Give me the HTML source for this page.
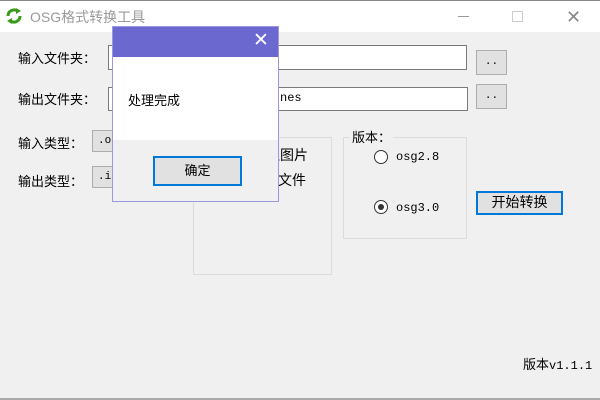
<!DOCTYPE html>
<html><head><meta charset="utf-8"><style>
*{margin:0;padding:0;box-sizing:border-box}
body{width:600px;height:400px;background:#f0f0f0;position:relative;overflow:hidden;font-family:"Liberation Sans","Noto Sans CJK SC",sans-serif;font-size:13px;color:#000}
.a{position:absolute;white-space:nowrap}
.tb{background:#fff;border:1px solid #7a7a7a}
.btn{background:#e1e1e1;border:1px solid #adadad;font-family:"Liberation Mono",monospace;font-size:11px;text-align:center}
.mono{font-family:"Liberation Mono","Noto Sans CJK SC",monospace}
.grp{border:1px solid #dcdcdc}
</style></head><body>
<div class="a" style="left:0;top:0;width:600px;height:32px;background:#fff;border-top:1px solid #888"></div>
<svg class="a" style="left:5px;top:7px" width="18" height="18" viewBox="0 0 18 18"><path d="M3 9a6 6 0 0 1 10-4.5" stroke="#3a9a1a" stroke-width="3" fill="none"/><path d="M11 1l5 3-5 3z" fill="#3a9a1a"/><path d="M15 9a6 6 0 0 1-10 4.5" stroke="#3a9a1a" stroke-width="3" fill="none"/><path d="M7 17l-5-3 5-3z" fill="#3a9a1a"/></svg>
<div class="a" style="left:30px;top:7px;font-size:14px;color:#9a9a9a">OSG格式转换工具</div>
<div class="a" style="left:458px;top:16px;width:11px;height:1px;background:#999"></div>
<div class="a" style="left:512px;top:11px;width:11px;height:11px;border:1px solid #ccc"></div>
<div class="a" style="left:566px;top:7px;font-size:18px;color:#888;font-weight:200">✕</div>

<div class="a" style="left:18px;top:48px">输入文件夹：</div>
<div class="a tb" style="left:108px;top:45px;width:359px;height:25px"></div>
<div class="a btn" style="left:476px;top:50px;width:31px;height:25px;line-height:22px">..</div>
<div class="a" style="left:18px;top:89px">输出文件夹：</div>
<div class="a tb" style="left:108px;top:87px;width:360px;height:24px"></div>
<div class="a mono" style="left:280px;top:91px;font-size:12px">nes</div>
<div class="a btn" style="left:476px;top:84px;width:31px;height:25px;line-height:22px">..</div>

<div class="a" style="left:18px;top:133px">输入类型：</div>
<div class="a btn" style="left:92px;top:130px;width:30px;height:22px;line-height:20px;text-align:left;padding-left:5px">.o</div>
<div class="a" style="left:18px;top:171px">输出类型：</div>
<div class="a btn" style="left:92px;top:166px;width:30px;height:22px;line-height:20px;text-align:left;padding-left:5px">.i</div>

<div class="a grp" style="left:193px;top:137px;width:139px;height:138px"></div>
<div class="a" style="left:266px;top:145px;font-size:14px">理图片</div>
<div class="a" style="left:278px;top:170px;font-size:14px">文件</div>

<div class="a grp" style="left:343px;top:137px;width:124px;height:102px"></div>
<div class="a" style="left:350px;top:127px;background:#f0f0f0;padding:0 2px">版本：</div>
<div class="a" style="left:374px;top:150px;width:14px;height:14px;border:1px solid #333;border-radius:50%;background:#fff"></div>
<div class="a mono" style="left:396px;top:150px;font-size:12px">osg2.8</div>
<div class="a" style="left:374px;top:200px;width:14px;height:14px;border:1px solid #333;border-radius:50%;background:#fff"></div>
<div class="a" style="left:378px;top:204px;width:6px;height:6px;border-radius:50%;background:#333"></div>
<div class="a mono" style="left:396px;top:201px;font-size:12px">osg3.0</div>
<div class="a" style="left:476px;top:191px;width:87px;height:24px;background:#e1e1e1;border:2px solid #0078d7;text-align:center;line-height:19px;font-size:14px">开始转换</div>

<div class="a" style="left:523px;top:354px">版本<span class="mono" style="font-size:12px">v1.1.1</span></div>
<div class="a" style="left:0;top:398px;width:600px;height:2px;background:#aaa"></div>

<div class="a" style="left:112px;top:26px;width:167px;height:176px;border:1px solid #9a98e0;background:#f0f0f0">
<div style="height:30px;background:#6b68d0;position:relative"><div class="a" style="left:140px;top:2px;color:#fff;font-size:19px">✕</div></div>
<div style="height:83px;background:#fff;position:relative"><div class="a" style="left:15px;top:33px">处理完成</div></div>
<div class="a" style="left:40px;top:129px;width:89px;height:30px;background:#e1e1e1;border:2px solid #0078d7;text-align:center;line-height:25px">确定</div>
</div>
</body></html>
